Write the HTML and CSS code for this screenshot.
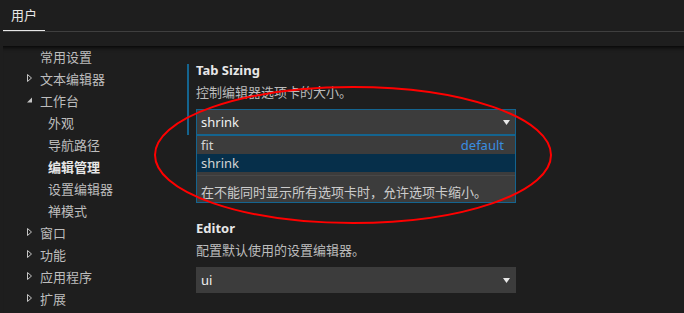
FILE: index.html
```html
<!DOCTYPE html>
<html lang="zh-CN">
<head>
  <meta charset="UTF-8">
  <title>设置</title>
  <link rel="stylesheet" href="styles.css">
</head>
<body>
  <!-- 标签栏 -->
  <div class="header">
    <div class="tabs">
      <span class="tab active">用户</span>
    </div>
  </div>

  <div class="content">
    <!-- 目录 -->
    <nav class="toc">
      <div class="toc-row">常用设置</div>
      <div class="toc-row">
        <svg class="twistie" width="5" height="8" viewBox="0 0 5 8"><polygon points="0.5,0.5 4.5,4 0.5,7.5" fill="none" stroke="#c5c5c5" stroke-width="1"/></svg>
        文本编辑器
      </div>
      <div class="toc-row">
        <svg class="twistie" width="5" height="8" viewBox="0 0 5 8"><polygon points="5,1.5 5,6.5 0,6.5" fill="#c5c5c5"/></svg>
        工作台
      </div>
      <div class="toc-row child">外观</div>
      <div class="toc-row child">导航路径</div>
      <div class="toc-row child current">编辑管理</div>
      <div class="toc-row child">设置编辑器</div>
      <div class="toc-row child">禅模式</div>
      <div class="toc-row">
        <svg class="twistie" width="5" height="8" viewBox="0 0 5 8"><polygon points="0.5,0.5 4.5,4 0.5,7.5" fill="none" stroke="#c5c5c5" stroke-width="1"/></svg>
        窗口
      </div>
      <div class="toc-row">
        <svg class="twistie" width="5" height="8" viewBox="0 0 5 8"><polygon points="0.5,0.5 4.5,4 0.5,7.5" fill="none" stroke="#c5c5c5" stroke-width="1"/></svg>
        功能
      </div>
      <div class="toc-row">
        <svg class="twistie" width="5" height="8" viewBox="0 0 5 8"><polygon points="0.5,0.5 4.5,4 0.5,7.5" fill="none" stroke="#c5c5c5" stroke-width="1"/></svg>
        应用程序
      </div>
      <div class="toc-row">
        <svg class="twistie" width="5" height="8" viewBox="0 0 5 8"><polygon points="0.5,0.5 4.5,4 0.5,7.5" fill="none" stroke="#c5c5c5" stroke-width="1"/></svg>
        扩展
      </div>
    </nav>

    <!-- 设置项 -->
    <main class="settings">
      <div class="setting focused">
        <div class="setting-title">Tab Sizing</div>
        <div class="setting-desc">控制编辑器选项卡的大小。</div>
        <div class="select-wrap">
          <div class="select open">
            <span>shrink</span>
            <svg class="caret" width="7" height="5" viewBox="0 0 7 5"><polygon points="0,0 7,0 3.5,5" fill="#e8e8e8"/></svg>
          </div>
          <div class="dropdown">
            <div class="option"><span>fit</span><span class="default">default</span></div>
            <div class="option selected"><span>shrink</span></div>
            <div class="details">在不能同时显示所有选项卡时，允许选项卡缩小。</div>
          </div>
        </div>
      </div>

      <!-- 被下拉框遮住的设置项 -->
      <div class="setting covered"></div>

      <div class="setting">
        <div class="setting-title">Editor</div>
        <div class="setting-desc">配置默认使用的设置编辑器。</div>
        <div class="select-wrap">
          <div class="select">
            <span>ui</span>
            <svg class="caret" width="7" height="5" viewBox="0 0 7 5"><polygon points="0,0 7,0 3.5,5" fill="#e8e8e8"/></svg>
          </div>
        </div>
      </div>
    </main>
  </div>

  <!-- 红色标注 -->
  <svg class="annotation" width="684" height="313" viewBox="0 0 684 313">
    <ellipse cx="353" cy="155" rx="198" ry="68" fill="none" stroke="#ff0000" stroke-width="2"/>
  </svg>
</body>
</html>
```

FILE: styles.css
```css
html, body {
  margin: 0;
  height: 100%;
  overflow: hidden;
}

body {
  position: relative;
  background-color: #1e1e1e;
  color: #cccccc;
  font-family: "Noto Sans", "Noto Sans CJK SC", sans-serif;
  font-size: 13px;
}

.header {
  height: 46px;
  padding-left: 3px;
  box-sizing: border-box;
}

.tabs {
  display: flex;
  height: 31px;
  border-bottom: 1px solid #3f3f3f;
}

.tab {
  padding: 0 8px;
  line-height: 30px;
  color: #e7e7e7;
}

.tab.active {
  border-bottom: 1px solid #e7e7e7;
}

.content {
  display: grid;
  grid-template-columns: 184px 1fr;
  margin-left: 3px;
  height: 267px;
  box-shadow: inset 0 6px 5px -5px #000000;
}

/* 目录 */
.toc {
  margin-top: -1px;
}

.toc-row {
  display: flex;
  align-items: center;
  height: 22px;
  padding-left: 37px;
  color: #bdbdbd;
  white-space: nowrap;
}

.toc-row .twistie {
  margin-left: -13px;
  margin-right: 8px;
}

.toc-row.child {
  padding-left: 45px;
}

.toc-row.current {
  font-weight: bold;
  color: #e7e7e7;
}

/* 设置项 */
.settings {
  padding-top: 18px;
}

.setting {
  width: 320px;
  padding-left: 7px;
  border-left: 2px solid transparent;
  margin-bottom: 16px;
}

.setting.focused {
  border-left-color: #14648f;
}

.setting.covered {
  height: 55px;
}

.setting-title {
  line-height: 12px;
  font-weight: bold;
  color: #e7e7e7;
  white-space: nowrap;
}

.setting-desc {
  margin-top: 7px;
  line-height: 18px;
  color: #bcbcbc;
}

.select-wrap {
  position: relative;
  margin-top: 8px;
}

.select {
  display: flex;
  align-items: center;
  justify-content: space-between;
  height: 26px;
  box-sizing: border-box;
  padding: 0 5px 0 4px;
  background-color: #3c3c3c;
  border: 1px solid #3c3c3c;
  color: #f0f0f0;
}

.select.open {
  border-color: #14648f;
}

.dropdown {
  position: absolute;
  top: 100%;
  left: 0;
  right: 0;
  z-index: 2;
  background-color: #3c3c3c;
  border: 1px solid #14648f;
}

.option {
  display: flex;
  justify-content: space-between;
  height: 18px;
  line-height: 18px;
  padding: 0 11px 0 4px;
  color: #d4d4d4;
}

.option.selected {
  background-color: #062f4a;
}

.option .default {
  color: #3a8ee0;
}

.details {
  margin-top: 3px;
  border-top: 1px solid #484848;
  padding: 7px 4px 1px;
  line-height: 18px;
  color: #cccccc;
}

.annotation {
  position: absolute;
  top: 0;
  left: 0;
  z-index: 5;
  pointer-events: none;
}
```
